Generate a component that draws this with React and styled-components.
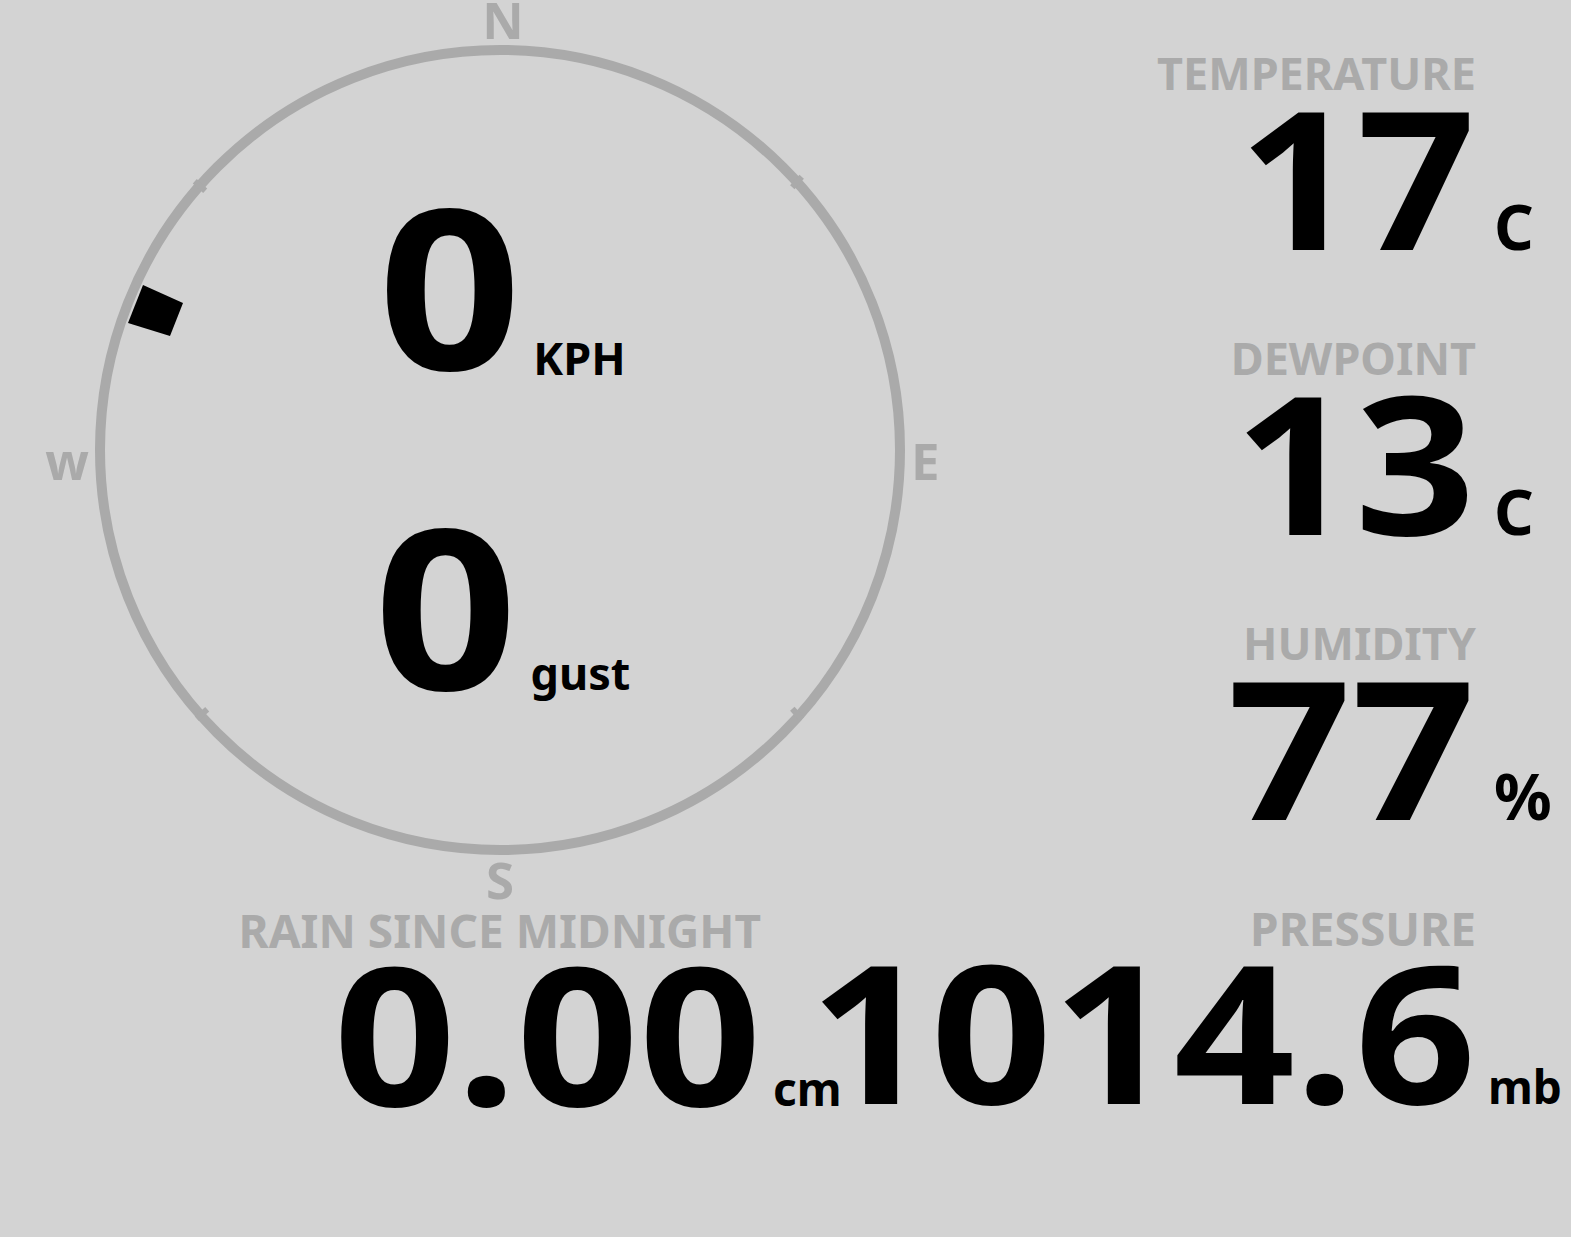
import React from "react";
import styled, { createGlobalStyle } from "styled-components";

const GlobalStyle = createGlobalStyle`
  html, body { margin: 0; padding: 0; background: #d3d3d3; }
  body { font-family: "Noto Sans", "DejaVu Sans", sans-serif; font-weight: 700; color: #000; }
`;

const Page = styled.div`
  width: 1571px;
  height: 1237px;
  display: flex;
  flex-direction: column;
  overflow: hidden;
`;

const Top = styled.div`
  display: flex;
  height: 905px;
`;

const CompassArea = styled.div`
  width: 1000px;
  flex: none;
  display: grid;
  & > * { grid-area: 1 / 1; }
`;

const CompassSvg = styled.svg`
  display: block;
  width: 1000px;
  height: 905px;
  overflow: visible;
`;

const CompassText = styled.text`
  font-family: "Noto Sans", sans-serif;
  font-weight: 700;
  font-size: 51px;
  fill: #aaa;
`;

const Readings = styled.div`
  display: flex;
  flex-direction: column;
  align-items: center;
  padding-top: 124px;
  padding-left: 4px;
`;

const Reading = styled.div`
  height: 320px;
  line-height: 320px;
  white-space: nowrap;
`;

const WideNum = styled.span`
  display: inline-block;
  font-size: ${(p) => p.$size}px;
  transform: scaleX(${(p) => p.$scale || 1.13});
  transform-origin: ${(p) => p.$origin || "right"} center;
  margin-right: ${(p) => p.$extra || 0}px;
`;

const ReadingUnit = styled.span`
  font-size: 45px;
  margin-left: ${(p) => p.$ml || 12}px;
  vertical-align: ${(p) => p.$drop || 0}px;
`;

const RightCol = styled.div`
  flex: 1;
  padding-top: 50px;
  display: flex;
  flex-direction: column;
`;

const Block = styled.div`
  display: grid;
  grid-template-columns: ${(p) => p.$cols};
  align-content: start;
  align-items: last baseline;
  height: ${(p) => p.$height || "auto"};
`;

const Label = styled.div`
  grid-column: 1;
  text-align: right;
  color: #aaa;
  font-size: ${(p) => p.$size || 45}px;
  line-height: ${(p) => p.$size || 45}px;
  padding-right: ${(p) => p.$pr || 0}px;
  padding-top: ${(p) => p.$pt || 0}px;
  white-space: nowrap;
`;

const Value = styled.div`
  grid-column: 1;
  text-align: right;
  font-size: ${(p) => p.$size}px;
  line-height: ${(p) => p.$lh}px;
  white-space: nowrap;
`;

const Unit = styled.div`
  grid-column: 2;
  font-size: ${(p) => p.$size}px;
  line-height: 1;
  padding-left: ${(p) => p.$pl}px;
  white-space: nowrap;
`;

const Bottom = styled.div`
  display: grid;
  grid-template-columns: 838px 1fr;
`;

function Stat({ label, value, unit, unitSize = 62, unitPl = 18, cols = "1fr 95px", height, labelSize = 45, labelPr, labelPt, size = 192, lh = 161, scale }) {
  return (
    <Block $cols={cols} $height={height}>
      <Label $size={labelSize} $pr={labelPr} $pt={labelPt}>{label}</Label>
      <span />
      <Value $size={size} $lh={lh}>
        <WideNum $size={size} $scale={scale}>{value}</WideNum>
      </Value>
      <Unit $size={unitSize} $pl={unitPl}>{unit}</Unit>
    </Block>
  );
}

const notches = [
  [200, 186, -48],
  [797, 182, 42],
  [202, 714, 48],
  [797, 714, -42],
];

function Compass() {
  return (
    <CompassSvg viewBox="0 0 1000 905">
      <circle cx="500" cy="450" r="400" fill="none" stroke="#aaa" strokeWidth="10" />
      {notches.map(([x, y, a]) => (
        <rect key={`${x}-${y}`} x={x - 3} y={y - 7} width="6" height="14" fill="#aaa" transform={`rotate(${a} ${x} ${y})`} />
      ))}
      <polygon points="143,285 183,303 170,336 128,323" fill="#000" />
      <CompassText x="503" y="39" textAnchor="middle">N</CompassText>
      <CompassText x="911" y="480">E</CompassText>
      <CompassText x="500" y="899" textAnchor="middle">S</CompassText>
      <CompassText x="89" y="480" textAnchor="end">w</CompassText>
    </CompassSvg>
  );
}

export default function App() {
  return (
    <Page>
      <GlobalStyle />
      <Top>
        <CompassArea>
          <Compass />
          <Readings>
            <Reading>
              <WideNum $size={222} $origin="left" $extra={16}>0</WideNum>
              <ReadingUnit $drop={-5}>KPH</ReadingUnit>
            </Reading>
            <Reading>
              <WideNum $size={222} $origin="left" $extra={16}>0</WideNum>
              <ReadingUnit $ml={14}>gust</ReadingUnit>
            </Reading>
          </Readings>
        </CompassArea>
        <RightCol>
          <Stat label="TEMPERATURE" value="17" unit="C" height="285px" scale={1.08} />
          <Stat label="DEWPOINT" value="13" unit="C" height="285px" scale={1.1} />
          <Stat label="HUMIDITY" value="77" unit="%" unitSize={64} height="285px" />
        </RightCol>
      </Top>
      <Bottom>
        <Stat label="RAIN SINCE MIDNIGHT" value="0.00" unit="cm" cols="1fr 77px" unitSize={46} unitPl={12} labelSize={46} labelPt={2} size={193} lh={158} scale={1.11} />
        <Stat label="PRESSURE" value="1014.6" unit="mb" cols="1fr 95px" unitSize={46} unitPl={12} labelSize={46} size={193} lh={158} scale={1.1} />
      </Bottom>
    </Page>
  );
}
